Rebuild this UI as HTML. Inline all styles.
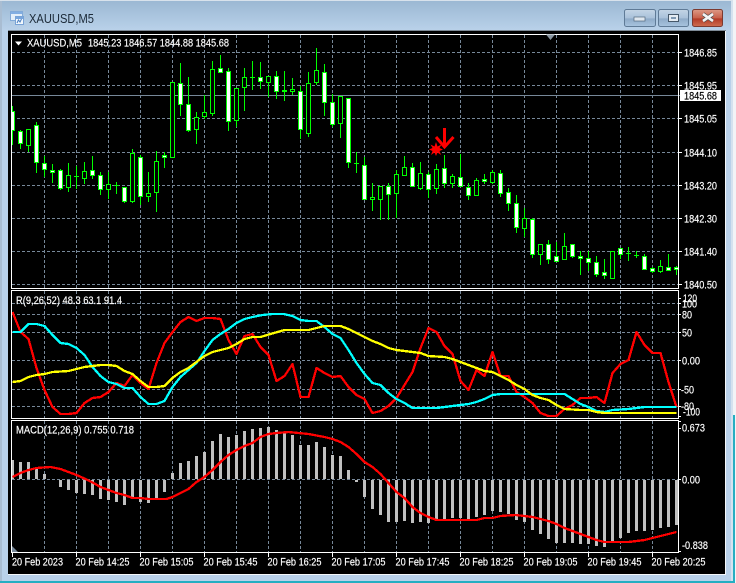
<!DOCTYPE html>
<html><head><meta charset="utf-8"><title>XAUUSD,M5</title>
<style>
html,body{margin:0;padding:0;background:#f2f4f7;width:736px;height:583px;overflow:hidden}
svg{display:block;position:absolute;left:0;top:0}
text{font-family:"Liberation Sans",sans-serif;font-size:11px;fill:#fff;stroke:#fff;stroke-width:.18px}
</style></head><body>
<svg width="736" height="583" viewBox="0 0 736 583" xmlns="http://www.w3.org/2000/svg">
<defs>
<linearGradient id="t" x1="0" y1="0" x2="0" y2="1"><stop offset="0" stop-color="#9bb8d3"/><stop offset="1" stop-color="#bad2ea"/></linearGradient>
<linearGradient id="b" x1="0" y1="0" x2="0" y2="1"><stop offset="0" stop-color="#c4d5e6"/><stop offset=".5" stop-color="#a9c1da"/><stop offset=".55" stop-color="#8fabc8"/><stop offset="1" stop-color="#a8c4df"/></linearGradient>
<linearGradient id="c" x1="0" y1="0" x2="0" y2="1"><stop offset="0" stop-color="#dd9a86"/><stop offset=".5" stop-color="#c8604a"/><stop offset=".55" stop-color="#b33a26"/><stop offset="1" stop-color="#cf6e50"/></linearGradient>
<clipPath id="m"><rect x="12" y="35" width="666" height="253"/></clipPath>
<clipPath id="p2"><rect x="12" y="291" width="666" height="127"/></clipPath>
<clipPath id="p3"><rect x="12" y="421" width="666" height="131"/></clipPath>
</defs>
<!-- window -->
<path d="M4 0H728Q733 0 733 5V583H0V4Q0 0 4 0Z" fill="#b9d1ea"/>
<rect x="2" y="1" width="730" height="30" fill="url(#t)"/>
<rect x="0" y="0" width="733" height="1" fill="#d8e2ec"/>
<rect x="0" y="1" width="2" height="582" fill="#a9bdd2"/>
<rect x="731" y="1" width="2" height="580" fill="#d5e2ef"/>
<rect x="0" y="581" width="735" height="2" fill="#25aec2"/>
<rect x="733" y="415" width="2" height="168" fill="#25aec2"/>
<!-- title -->
<g>
<rect x="10.5" y="11.5" width="12" height="9" fill="#e4eff9" stroke="#82aad8"/><rect x="11" y="12" width="11" height="2" fill="#82aee2"/>
<rect x="15.5" y="16.5" width="8" height="8" fill="#f2f8fd" stroke="#78a3d6"/><rect x="16" y="17" width="7" height="2" fill="#78a6de"/>
<path d="M17 23l1.5-3 1.5 2 1.5-3" fill="none" stroke="#4a7fc0"/>
</g>
<text x="29" y="23" style="font-size:12.5px;fill:#1c2a38;stroke:none" textLength="65" lengthAdjust="spacingAndGlyphs">XAUUSD,M5</text>
<!-- buttons -->
<rect x="624.5" y="9.5" width="31" height="17" rx="2" fill="url(#b)" stroke="#5f7a96"/>
<rect x="634" y="17" width="11" height="4" fill="#dfe7ef" stroke="#52677c" stroke-width=".7"/>
<rect x="658.5" y="9.5" width="30" height="17" rx="2" fill="url(#b)" stroke="#5f7a96"/>
<rect x="668.5" y="14.5" width="10" height="7" fill="#e4ebf2" stroke="#46586a"/><rect x="671" y="17" width="5" height="2" fill="#7f98b2"/>
<rect x="692.5" y="9.5" width="30" height="17" rx="2" fill="url(#c)" stroke="#7c3a30"/>
<path d="M703 14l10 7M713 14l-10 7" stroke="#4a4a4a" stroke-width="4"/><path d="M703 14l10 7M713 14l-10 7" stroke="#f4f4f4" stroke-width="2.6"/>
<!-- client -->
<rect x="8" y="30" width="718" height="1" fill="#7e8a96"/>
<rect x="8" y="31" width="717" height="543" fill="#000"/>
<rect x="725" y="31" width="1" height="544" fill="#f4f7fa"/>
<rect x="8" y="574" width="718" height="1" fill="#f4f7fa"/>
<!-- grid -->
<g fill="none" stroke="#778899" stroke-width="1" stroke-dasharray="3 2" shape-rendering="crispEdges">
<path clip-path="url(#m)" d="M12 52.5H678M12 85.5H678M12 118.5H678M12 152.5H678M12 185.5H678M12 218.5H678M12 251.5H678M12 284.5H678"/>
<path clip-path="url(#p2)" d="M12 303.5H678M12 314.5H678M12 332.5H678M12 360.5H678M12 389.5H678M12 406.5H678"/>
<path clip-path="url(#p3)" d="M12 479.5H678"/>
<path d="M44.5 35V288M76.5 35V288M108.5 35V288M140.5 35V288M172.5 35V288M204.5 35V288M236.5 35V288M268.5 35V288M300.5 35V288M332.5 35V288M364.5 35V288M396.5 35V288M428.5 35V288M460.5 35V288M492.5 35V288M524.5 35V288M556.5 35V288M588.5 35V288M620.5 35V288M652.5 35V288"/>
<path d="M44.5 291V418M76.5 291V418M108.5 291V418M140.5 291V418M172.5 291V418M204.5 291V418M236.5 291V418M268.5 291V418M300.5 291V418M332.5 291V418M364.5 291V418M396.5 291V418M428.5 291V418M460.5 291V418M492.5 291V418M524.5 291V418M556.5 291V418M588.5 291V418M620.5 291V418M652.5 291V418"/>
<path d="M44.5 421V552M76.5 421V552M108.5 421V552M140.5 421V552M172.5 421V552M204.5 421V552M236.5 421V552M268.5 421V552M300.5 421V552M332.5 421V552M364.5 421V552M396.5 421V552M428.5 421V552M460.5 421V552M492.5 421V552M524.5 421V552M556.5 421V552M588.5 421V552M620.5 421V552M652.5 421V552"/>
</g>
<path d="M12 95.5H680" stroke="#778899"/>
<!-- candles -->
<g clip-path="url(#m)" shape-rendering="crispEdges">
<path fill="none" stroke="#0f0" d="M12.5 106V145M20.5 130V149M28.5 129V152M36.5 122V173M44.5 156V177M52.5 164V183M60.5 169V190M68.5 163V192M76.5 166V189M84.5 162V184M92.5 156V179M100.5 172V195M108.5 172V199M116.5 182V194M124.5 187V203M132.5 149V203M140.5 155V205M148.5 172V202M156.5 151V212M164.5 152V168M172.5 82V157M180.5 63V116M188.5 77V132M196.5 112V144M204.5 95V119M212.5 61V116M220.5 55V73M228.5 68V131M236.5 88V127M244.5 68V111M252.5 61V90M260.5 62V89M268.5 76V97M276.5 71V99M284.5 71V101M292.5 78V95M300.5 86V139M308.5 72V137M316.5 48V85M324.5 64V116M332.5 94V127M340.5 96V138M348.5 98V168M356.5 152V173M364.5 157V199M372.5 183V211M380.5 186V220M388.5 183V220M396.5 170V218M404.5 156V176M412.5 163V187M420.5 162V190M428.5 172V198M436.5 164V194M444.5 155V188M452.5 174V188M460.5 154V187M468.5 183V200M476.5 178V195M484.5 174V184M492.5 170V184M500.5 170V197M508.5 188V211M516.5 195V233M524.5 208V237M532.5 218V258M540.5 244V265M548.5 240V264M556.5 242V261M564.5 233V260M572.5 244V258M580.5 251V275M588.5 251V271M596.5 256V277M604.5 259V279M612.5 251V278M620.5 248V259M628.5 247V261M636.5 251V258M644.5 254V270M652.5 267V273M660.5 260V273M668.5 254V271M676.5 266V275"/>
<path fill="none" stroke="#0f0" d="M74 176.5h5M114 185.5h5M250 77.5h5M354 163.5h5M626 253.5h5M634 255.5h5"/>
<path fill="#fff" stroke="#0f0" d="M10.5 111.5h4v19h-4zM18.5 131.5h4v12h-4zM34.5 125.5h4v37h-4zM42.5 163.5h4v6h-4zM50.5 170.5h4v2h-4zM58.5 170.5h4v18h-4zM90.5 170.5h4v5h-4zM98.5 175.5h4v14h-4zM122.5 187.5h4v14h-4zM138.5 157.5h4v39h-4zM162.5 155.5h4v2h-4zM178.5 83.5h4v21h-4zM186.5 104.5h4v26h-4zM218.5 68.5h4v4h-4zM226.5 71.5h4v50h-4zM258.5 77.5h4v4h-4zM274.5 76.5h4v15h-4zM282.5 90.5h4v1h-4zM298.5 91.5h4v38h-4zM322.5 72.5h4v30h-4zM330.5 102.5h4v22h-4zM346.5 98.5h4v64h-4zM362.5 165.5h4v34h-4zM386.5 186.5h4v8h-4zM410.5 167.5h4v19h-4zM426.5 174.5h4v15h-4zM442.5 168.5h4v15h-4zM458.5 177.5h4v9h-4zM466.5 187.5h4v8h-4zM482.5 179.5h4v2h-4zM498.5 173.5h4v20h-4zM506.5 192.5h4v11h-4zM514.5 203.5h4v24h-4zM530.5 219.5h4v35h-4zM546.5 244.5h4v15h-4zM554.5 256.5h4v5h-4zM570.5 244.5h4v12h-4zM578.5 256.5h4v2h-4zM586.5 258.5h4v4h-4zM594.5 262.5h4v12h-4zM602.5 272.5h4v3h-4zM618.5 248.5h4v6h-4zM642.5 256.5h4v13h-4zM650.5 268.5h4v3h-4zM666.5 267.5h4v3h-4zM674.5 267.5h4v2h-4z"/>
<path fill="#000" stroke="#0f0" d="M26.5 129.5h4v16h-4zM66.5 175.5h4v12h-4zM82.5 171.5h4v7h-4zM106.5 184.5h4v5h-4zM130.5 153.5h4v48h-4zM146.5 193.5h4v3h-4zM154.5 161.5h4v31h-4zM170.5 82.5h4v75h-4zM194.5 117.5h4v12h-4zM202.5 112.5h4v4h-4zM210.5 69.5h4v44h-4zM234.5 88.5h4v32h-4zM242.5 77.5h4v10h-4zM266.5 76.5h4v6h-4zM290.5 89.5h4v2h-4zM306.5 83.5h4v50h-4zM314.5 70.5h4v12h-4zM338.5 96.5h4v27h-4zM370.5 197.5h4v2h-4zM378.5 186.5h4v13h-4zM394.5 174.5h4v19h-4zM402.5 167.5h4v8h-4zM418.5 173.5h4v15h-4zM434.5 169.5h4v19h-4zM450.5 176.5h4v7h-4zM474.5 180.5h4v15h-4zM490.5 172.5h4v10h-4zM522.5 218.5h4v10h-4zM538.5 244.5h4v10h-4zM562.5 246.5h4v13h-4zM610.5 251.5h4v27h-4zM658.5 266.5h4v5h-4z"/>
</g>
<!-- arrow + star -->
<path d="M444.5 128V147M436 137l8.5 10 9-10" fill="none" stroke="#f00" stroke-width="3"/>
<path d="M436 142L437.5 146.5 441.5 144.5 439.5 148 443 149.5 439.5 151 441 155 437.5 152.5 436 156 434.5 152.5 431 155 432.5 151 429 149.5 432.5 148 430.5 144.5 434.5 146.5Z" fill="#f00"/>
<!-- indicator 1 -->
<g clip-path="url(#p2)" fill="none" stroke-width="2.3" stroke-linejoin="round" shape-rendering="crispEdges">
<polyline stroke="#f00" points="12.5,312 20.5,332 28.5,339 36.5,368 44.5,390 52.5,407 60.5,414 68.5,414 76.5,413 84.5,403 92.5,398 100.5,397 108.5,392 116.5,383 124.5,386 132.5,375 140.5,383 148.5,389 156.5,363 164.5,343 172.5,332 180.5,322 188.5,317 196.5,321 204.5,318 212.5,318 220.5,319 228.5,340 236.5,354 244.5,336 252.5,334 260.5,347 268.5,355 276.5,381 284.5,376 292.5,364 300.5,397 308.5,397 316.5,368 324.5,373 332.5,377 340.5,376 348.5,387 356.5,395 364.5,399 372.5,413 380.5,411 388.5,406 396.5,398 404.5,385 412.5,372 420.5,348 428.5,328 436.5,332 444.5,346 452.5,354 460.5,381 468.5,390 476.5,370 484.5,376 492.5,352 500.5,376 508.5,376 516.5,392 524.5,397 532.5,403 540.5,413 548.5,416 556.5,416 564.5,409 572.5,405 580.5,398 588.5,398 596.5,397 604.5,403 612.5,373 620.5,364 628.5,360 636.5,332 644.5,345 652.5,353 660.5,353 668.5,382 676.5,407"/>
<polyline stroke="#0ff" points="12.5,332 20.5,332 28.5,324 36.5,324 44.5,326 52.5,335 60.5,343 68.5,344 76.5,348 84.5,355 92.5,367 100.5,376 108.5,382 116.5,384 124.5,388 132.5,388 140.5,397 148.5,404 156.5,404 164.5,401 172.5,387 180.5,377 188.5,370 196.5,363 204.5,351 212.5,340 220.5,334 228.5,329 236.5,323 244.5,319 252.5,317 262.5,315 272.5,314 283.5,314 292.5,316 300.5,320 308.5,321 316.5,321 324.5,327 332.5,334 340.5,338 348.5,350 356.5,363 364.5,374 372.5,383 380.5,385 388.5,393 396.5,399 404.5,403 412.5,408 436.5,408 452.5,406 468.5,404 476.5,402 484.5,399 492.5,395 500.5,394 564.5,394 572.5,399 580.5,404 588.5,407 596.5,411 604.5,412 612.5,410 628.5,409 636.5,408 644.5,407 676.5,407"/>
<polyline stroke="#ff0" points="12.5,382 20.5,381 28.5,377 36.5,375 44.5,374 52.5,372 68.5,371 76.5,369 84.5,367 100.5,365 108.5,365 116.5,366 124.5,371 132.5,374 140.5,381 148.5,387 156.5,387 164.5,386 172.5,378 180.5,372 188.5,368 196.5,362 204.5,356 212.5,352 228.5,348 236.5,344 244.5,339 252.5,337 260.5,337 270.5,334 284.5,330 308.5,330 316.5,328 324.5,326 340.5,326 348.5,329 364.5,337 372.5,341 380.5,344 388.5,348 396.5,350 404.5,351 420.5,353 428.5,356 444.5,357 452.5,359 468.5,365 476.5,368 484.5,371 492.5,372 500.5,376 508.5,380 516.5,385 524.5,389 532.5,395 540.5,398 548.5,400 556.5,405 564.5,409 580.5,410 588.5,410 596.5,412 604.5,413 676.5,413"/>
</g>
<!-- macd -->
<g clip-path="url(#p3)" fill="none" shape-rendering="crispEdges">
<path stroke="#c0c0c0" stroke-width="3" d="M12.5 479V460M20.5 479V462M28.5 479V462M36.5 479V469M44.5 479V474M60.5 480V487M68.5 480V490M76.5 480V493M84.5 480V494M92.5 480V495M100.5 480V499M108.5 480V500M116.5 480V502M124.5 480V505M132.5 480V498M140.5 480V502M148.5 480V503M156.5 480V499M164.5 480V492M172.5 479V473M180.5 479V463M188.5 479V461M196.5 479V456M204.5 479V452M212.5 479V441M220.5 479V434M228.5 479V437M236.5 479V435M244.5 479V431M252.5 479V429M260.5 479V428M268.5 479V427M276.5 479V430M284.5 479V432M292.5 479V435M300.5 479V445M308.5 479V445M316.5 479V442M324.5 479V447M332.5 479V455M340.5 479V456M348.5 479V470M356.5 480V482M364.5 480V497M372.5 480V509M380.5 480V515M388.5 480V522M396.5 480V522M404.5 480V521M412.5 480V523M420.5 480V522M428.5 480V523M436.5 480V519M444.5 480V519M452.5 480V518M460.5 480V518M468.5 480V519M476.5 480V517M484.5 480V515M492.5 480V511M500.5 480V512M508.5 480V514M516.5 480V520M524.5 480V522M532.5 480V530M540.5 480V534M548.5 480V539M556.5 480V543M564.5 480V543M572.5 480V543M580.5 480V544M588.5 480V544M596.5 480V546M604.5 480V547M612.5 480V541M620.5 480V538M628.5 480V533M636.5 480V531M644.5 480V531M652.5 480V530M660.5 480V528M668.5 480V527M676.5 480V525"/>
<polyline stroke="#f00" stroke-width="2.3" stroke-linejoin="round" points="12.5,477 20.5,473 28.5,470 36.5,468 50.5,467 60.5,469 68.5,472 76.5,475 85.5,479 93.5,483 100.5,487 108.5,490 116.5,493 124.5,495 132.5,498 140.5,498 148.5,499 166.5,499 172.5,497 180.5,493 188.5,489 196.5,482 204.5,477 212.5,470 220.5,462 228.5,455 236.5,450 244.5,446 252.5,443 260.5,437 268.5,434 276.5,433 288.5,432 308.5,434 324.5,437 332.5,439 340.5,442 348.5,447 356.5,454 364.5,462 372.5,467 380.5,474 388.5,483 396.5,492 404.5,498 412.5,507 420.5,513 428.5,517 436.5,520 476.5,520 484.5,518 492.5,518 500.5,516 515.5,515 524.5,516 532.5,517 548.5,521 556.5,524 564.5,528 572.5,531 580.5,534 588.5,537 596.5,540 604.5,542 628.5,542 636.5,541 644.5,540 652.5,538 660.5,536 668.5,534 676.5,532"/>
</g>
<!-- frames -->
<g fill="none" stroke="#fff" shape-rendering="crispEdges">
<rect x="11.5" y="34.5" width="667" height="254"/>
<rect x="11.5" y="290.5" width="667" height="128"/>
<rect x="11.5" y="420.5" width="667" height="132"/>
<path d="M679 52.5h3M679 85.5h3M679 118.5h3M679 152.5h3M679 185.5h3M679 218.5h3M679 251.5h3M679 284.5h3M679 298.5h2M679 303.5h2M679 314.5h2M679 332.5h2M679 360.5h2M679 389.5h2M679 406.5h2M679 416.5h2M679 421.5h2M679 428.5h2M679 479.5h2M679 551.5h2M12.5 553v4M76.5 553v4M140.5 553v4M204.5 553v4M268.5 553v4M332.5 553v4M396.5 553v4M460.5 553v4M524.5 553v4M588.5 553v4M652.5 553v4"/>
</g>
<path d="M546 34.5h9l-4.5 5.5z" fill="#8a96a2"/>
<path d="M12 546l6 6h-6z" fill="#778899"/>
<path d="M15 41.5h7l-3.5 4z" fill="#fff"/>
<!-- price label -->
<rect x="680" y="90" width="41" height="11" fill="#fff"/>
<!-- texts -->
<text x="27" y="46.5" textLength="55" lengthAdjust="spacingAndGlyphs">XAUUSD,M5</text>
<text x="88" y="46.5" textLength="141" lengthAdjust="spacingAndGlyphs">1845.23 1846.57 1844.88 1845.68</text>
<text x="684" y="56.5" textLength="33" lengthAdjust="spacingAndGlyphs">1846.85</text>
<text x="684" y="89.5" textLength="33" lengthAdjust="spacingAndGlyphs">1845.95</text>
<text x="684" y="99.5" textLength="33" lengthAdjust="spacingAndGlyphs" style="fill:#000;stroke:#000">1845.68</text>
<text x="684" y="122.5" textLength="33" lengthAdjust="spacingAndGlyphs">1845.05</text>
<text x="684" y="156.5" textLength="33" lengthAdjust="spacingAndGlyphs">1844.10</text>
<text x="684" y="189.5" textLength="33" lengthAdjust="spacingAndGlyphs">1843.20</text>
<text x="684" y="222.5" textLength="33" lengthAdjust="spacingAndGlyphs">1842.30</text>
<text x="684" y="255.5" textLength="33" lengthAdjust="spacingAndGlyphs">1841.40</text>
<text x="684" y="288.5" textLength="33" lengthAdjust="spacingAndGlyphs">1840.50</text>
<text x="16" y="304" textLength="106" lengthAdjust="spacingAndGlyphs">R(9,26,52) 48.3 63.1 91.4</text>
<text x="683" y="302" textLength="14" lengthAdjust="spacingAndGlyphs">120</text>
<text x="682" y="307.5" textLength="15" lengthAdjust="spacingAndGlyphs">100</text>
<text x="682" y="318.5" textLength="10" lengthAdjust="spacingAndGlyphs">80</text>
<text x="682" y="336.5" textLength="10" lengthAdjust="spacingAndGlyphs">50</text>
<text x="682" y="364.5" textLength="18" lengthAdjust="spacingAndGlyphs">0.00</text>
<text x="681" y="393.5" textLength="13" lengthAdjust="spacingAndGlyphs">-50</text>
<text x="681" y="410" textLength="13" lengthAdjust="spacingAndGlyphs">-80</text>
<text x="683" y="415.5" textLength="17" lengthAdjust="spacingAndGlyphs">-100</text>
<text x="16" y="433.5" textLength="118" lengthAdjust="spacingAndGlyphs">MACD(12,26,9) 0.755 0.718</text>
<text x="682" y="431.5" textLength="23" lengthAdjust="spacingAndGlyphs">0.673</text>
<text x="682" y="483.5" textLength="18" lengthAdjust="spacingAndGlyphs">0.00</text>
<text x="682" y="549" textLength="26" lengthAdjust="spacingAndGlyphs">-0.838</text>
<text x="12" y="565.5" textLength="51" lengthAdjust="spacingAndGlyphs">20 Feb 2023</text>
<text x="75.5" y="565.5" textLength="54" lengthAdjust="spacingAndGlyphs">20 Feb 14:25</text>
<text x="139.5" y="565.5" textLength="54" lengthAdjust="spacingAndGlyphs">20 Feb 15:05</text>
<text x="203.5" y="565.5" textLength="54" lengthAdjust="spacingAndGlyphs">20 Feb 15:45</text>
<text x="267.5" y="565.5" textLength="54" lengthAdjust="spacingAndGlyphs">20 Feb 16:25</text>
<text x="331.5" y="565.5" textLength="54" lengthAdjust="spacingAndGlyphs">20 Feb 17:05</text>
<text x="395.5" y="565.5" textLength="54" lengthAdjust="spacingAndGlyphs">20 Feb 17:45</text>
<text x="459.5" y="565.5" textLength="54" lengthAdjust="spacingAndGlyphs">20 Feb 18:25</text>
<text x="523.5" y="565.5" textLength="54" lengthAdjust="spacingAndGlyphs">20 Feb 19:05</text>
<text x="587.5" y="565.5" textLength="54" lengthAdjust="spacingAndGlyphs">20 Feb 19:45</text>
<text x="651.5" y="565.5" textLength="54" lengthAdjust="spacingAndGlyphs">20 Feb 20:25</text>
</svg>
</body></html>
